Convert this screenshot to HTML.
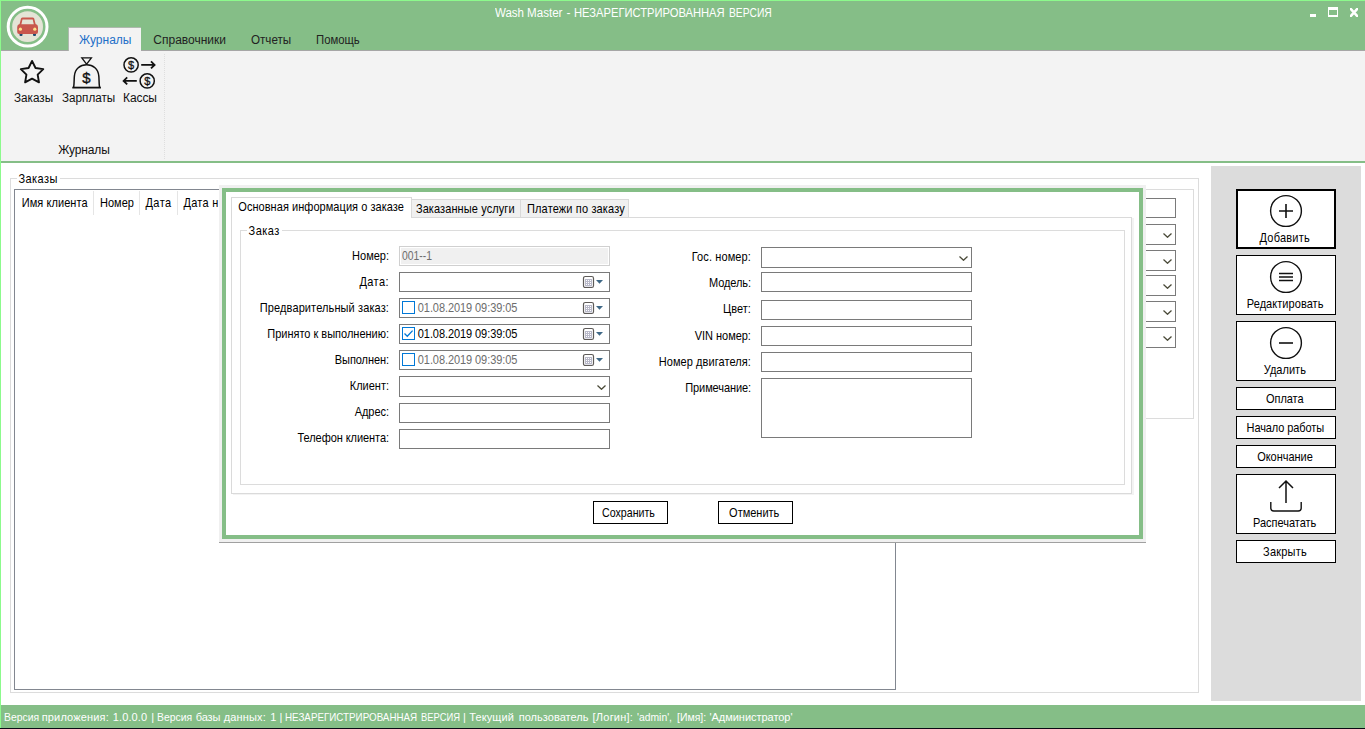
<!DOCTYPE html>
<html lang="ru"><head><meta charset="utf-8"><title>Wash Master</title>
<style>
html,body{margin:0;padding:0}
body{width:1365px;height:729px;overflow:hidden;background:#fff;position:relative;font-family:'Liberation Sans', sans-serif}
div,svg,span.t{position:absolute}
span.t{white-space:pre;font-family:'Liberation Sans', sans-serif}
</style></head><body>
<div class="" style="left:0px;top:0px;width:1365px;height:50px;background:#85be87"></div>
<div class="" style="left:0px;top:50px;width:1365px;height:1px;background:#a6a6a6"></div>
<div class="" style="left:0px;top:51px;width:1365px;height:110px;background:#f3f3f3"></div>
<div class="" style="left:0px;top:161px;width:1365px;height:2px;background:#85be87"></div>
<div class="" style="left:68px;top:27px;width:73px;height:24px;background:#f3f3f3;border-left:1px solid #aeb9ae;border-top:1px solid #aeb9ae;box-sizing:border-box"></div>
<div class="" style="left:164px;top:54px;width:0px;height:105px;border-left:1px dotted #dedede"></div>
<svg style="left:5px;top:4px" width="46" height="46" viewBox="0 0 46 46">
<circle cx="22.6" cy="22.7" r="19.4" fill="none" stroke="#fff" stroke-width="3"/>
<circle cx="22.6" cy="22.7" r="15.4" fill="#e4e4d6"/>
<rect x="14.5" y="29" width="3" height="3" rx="1" fill="#1f4a70"/><rect x="28" y="29" width="3" height="3" rx="1" fill="#1f4a70"/>
<path d="M14.6 20 L16 14.6 Q16.4 13.4 17.8 13.4 H27.4 Q28.8 13.4 29.2 14.6 L30.6 20 Q33 20.4 33 23 V28 Q33 30 31 30 H14.2 Q12.2 30 12.2 28 V23 Q12.2 20.4 14.6 20 Z" fill="#c9574d"/>
<path d="M16.4 20.2 L17.5 15.6 H27.7 L28.8 20.2 Z" fill="#e4e4d6"/>
<circle cx="15.4" cy="25.2" r="1.6" fill="#ffe08a"/><circle cx="29.8" cy="25.2" r="1.6" fill="#ffe08a"/>
</svg>
<div class="" style="left:1310px;top:14px;width:6px;height:3px;background:#fff"></div>
<div class="" style="left:1328px;top:7px;width:10px;height:10px;border:1px solid #fff;border-top-width:3px;border-bottom-width:2px;box-sizing:border-box"></div>
<svg style="left:1350px;top:8px;overflow:hidden" width="8" height="9" viewBox="0 0 8 9"><path d="M-1 -1.1 L9 10.1 M9 -1.1 L-1 10.1" stroke="#fff" stroke-width="2.5" fill="none"/></svg>
<svg style="left:12px;top:54px" width="150" height="40" viewBox="12 54 150 40" fill="none" stroke="#111">
<path id="star" stroke-width="1.9" stroke-linejoin="round" d="M32.05 60.95 L35.52 67.98 L43.27 69.10 L37.66 74.57 L38.99 82.30 L32.05 78.65 L25.11 82.30 L26.44 74.57 L20.83 69.10 L28.58 67.98 Z"/>
<path stroke-width="1.3" d="M81.8 57.8 H91.4 L86.6 64.2 Z"/>
<path stroke-width="1.5" d="M73.6 88 C74.4 82 74 79 74.4 76 C75 69 80 64.8 86.6 64.8 C93.2 64.8 98.2 69 98.8 76 C99.2 79 98.8 82 99.6 88"/>
<path stroke-width="1.8" d="M72.3 87.6 H100.9"/>
<circle cx="131.1" cy="64.9" r="7.1" stroke-width="1.5"/>
<circle cx="147.2" cy="80.9" r="7.1" stroke-width="1.5"/>
<path stroke-width="1.8" d="M141.2 64.9 H154.2 M151 61.4 L154.6 64.9 L151 68.4"/>
<path stroke-width="1.8" d="M136.8 80.9 H124 M127.2 77.4 L123.6 80.9 L127.2 84.4"/>
</svg>
<span class="t" style="left:82.2px;top:69.9px;font-size:15px;line-height:15px;color:#111;-webkit-text-stroke:0.35px #111">$</span>
<span class="t" style="left:128.1px;top:59.6px;font-size:11px;line-height:11px;color:#111;-webkit-text-stroke:0.3px #111">$</span>
<span class="t" style="left:144.2px;top:75.6px;font-size:11px;line-height:11px;color:#111;-webkit-text-stroke:0.3px #111">$</span>
<div class="" style="left:10px;top:178px;width:1189px;height:515px;border:1px solid #dcdcdc;box-sizing:border-box"></div>
<div class="" style="left:17px;top:176px;width:43px;height:5px;background:#fff"></div>
<div class="" style="left:14px;top:189px;width:882px;height:501px;border:1px solid #828790;box-sizing:border-box;background:#fff"></div>
<div class="" style="left:93px;top:191px;width:1px;height:24px;background:#e5e5e5"></div>
<div class="" style="left:139px;top:191px;width:1px;height:24px;background:#e5e5e5"></div>
<div class="" style="left:177px;top:191px;width:1px;height:24px;background:#e5e5e5"></div>
<div class="" style="left:900px;top:189px;width:294px;height:230px;border:1px solid #dcdcdc;box-sizing:border-box"></div>
<div class="" style="left:1100px;top:198px;width:76px;height:20px;border:1px solid #7a7a7a;box-sizing:border-box;background:#fff"></div>
<div class="" style="left:1100px;top:224px;width:76px;height:21px;border:1px solid #7a7a7a;box-sizing:border-box;background:#fff"><svg style="right:3.2px;top:7.6px" width="9" height="5" viewBox="0 0 9 5"><path d="M0.5 0.5 L4.5 4.3 L8.5 0.5" stroke="#4a4a38" stroke-width="1.25" fill="none"/></svg></div>
<div class="" style="left:1100px;top:250px;width:76px;height:21px;border:1px solid #7a7a7a;box-sizing:border-box;background:#fff"><svg style="right:3.2px;top:7.6px" width="9" height="5" viewBox="0 0 9 5"><path d="M0.5 0.5 L4.5 4.3 L8.5 0.5" stroke="#4a4a38" stroke-width="1.25" fill="none"/></svg></div>
<div class="" style="left:1100px;top:275px;width:76px;height:21px;border:1px solid #7a7a7a;box-sizing:border-box;background:#fff"><svg style="right:3.2px;top:7.6px" width="9" height="5" viewBox="0 0 9 5"><path d="M0.5 0.5 L4.5 4.3 L8.5 0.5" stroke="#4a4a38" stroke-width="1.25" fill="none"/></svg></div>
<div class="" style="left:1100px;top:301px;width:76px;height:21px;border:1px solid #7a7a7a;box-sizing:border-box;background:#fff"><svg style="right:3.2px;top:7.6px" width="9" height="5" viewBox="0 0 9 5"><path d="M0.5 0.5 L4.5 4.3 L8.5 0.5" stroke="#4a4a38" stroke-width="1.25" fill="none"/></svg></div>
<div class="" style="left:1100px;top:327px;width:76px;height:21px;border:1px solid #7a7a7a;box-sizing:border-box;background:#fff"><svg style="right:3.2px;top:7.6px" width="9" height="5" viewBox="0 0 9 5"><path d="M0.5 0.5 L4.5 4.3 L8.5 0.5" stroke="#4a4a38" stroke-width="1.25" fill="none"/></svg></div>
<div class="" style="left:1211px;top:166px;width:150px;height:535px;background:#dcdcdc"></div>
<div class="" style="left:1236px;top:189px;width:100px;height:60px;border:2px solid #000;box-sizing:border-box;background:#fff"></div>
<div class="" style="left:1236px;top:255px;width:100px;height:60px;border:1px solid #000;box-sizing:border-box;background:#fff"></div>
<div class="" style="left:1236px;top:321px;width:100px;height:60px;border:1px solid #000;box-sizing:border-box;background:#fff"></div>
<div class="" style="left:1236px;top:387px;width:100px;height:23px;border:1px solid #000;box-sizing:border-box;background:#fff"></div>
<div class="" style="left:1236px;top:416px;width:100px;height:23px;border:1px solid #000;box-sizing:border-box;background:#fff"></div>
<div class="" style="left:1236px;top:445px;width:100px;height:23px;border:1px solid #000;box-sizing:border-box;background:#fff"></div>
<div class="" style="left:1236px;top:474px;width:100px;height:60px;border:1px solid #000;box-sizing:border-box;background:#fff"></div>
<div class="" style="left:1236px;top:540px;width:100px;height:23px;border:1px solid #000;box-sizing:border-box;background:#fff"></div>
<svg style="left:1266px;top:190px" width="40" height="330" viewBox="1266 190 40 330" fill="none" stroke="#111" stroke-width="1.4">
<circle cx="1286" cy="211" r="15.4"/><path d="M1279 211 H1293 M1286 204 V218" stroke-width="1.6"/>
<circle cx="1286" cy="277" r="15.4"/><path d="M1279 273.5 H1293 M1279 277 H1293 M1279 280.5 H1293" stroke-width="1.4"/>
<circle cx="1286" cy="343" r="15.4"/><path d="M1279 343 H1293" stroke-width="1.6"/>
<path d="M1286 503 V481 M1279 488 L1286 481 L1293 488" stroke-width="1.5"/>
<path d="M1270.8 502 V508 Q1270.8 511 1273.8 511 H1298.2 Q1301.2 511 1301.2 508 V502" stroke-width="1.4"/>
</svg>
<div class="" style="left:0px;top:705px;width:1365px;height:23px;background:#85be87"></div>
<div class="" style="left:0px;top:728px;width:1365px;height:1px;background:#0a0a14"></div>
<div class="" style="left:0px;top:0px;width:1365px;height:1px;background:#8cfa8c"></div>
<div class="" style="left:0px;top:0px;width:1px;height:728px;background:#8cfa8c"></div>
<div class="" style="left:219px;top:185px;width:927px;height:357px;background:#f0f0f0"></div>
<div class="" style="left:219px;top:542px;width:927px;height:1px;background:#a0a0a0"></div>
<div class="" style="left:222px;top:188px;width:921px;height:351px;background:#fff;border:4px solid #85be87;box-sizing:border-box"></div>
<div class="" style="left:231px;top:217px;width:901px;height:277px;border:1px solid #dadada;box-sizing:border-box;background:#fff;box-shadow:2px 1px 0 #f3f3f3"></div>
<div class="" style="left:411px;top:199px;width:110px;height:19px;border:1px solid #d9d9d9;box-sizing:border-box;background:#f0f0f0"></div>
<div class="" style="left:520px;top:199px;width:109px;height:19px;border:1px solid #d9d9d9;box-sizing:border-box;background:#f0f0f0"></div>
<div class="" style="left:231px;top:197px;width:181px;height:21px;border:1px solid #d9d9d9;border-bottom:none;box-sizing:border-box;background:#fff"></div>
<div class="" style="left:240px;top:230px;width:885px;height:255px;border:1px solid #dcdcdc;box-sizing:border-box"></div>
<div class="" style="left:247px;top:228px;width:35px;height:5px;background:#fff"></div>
<div class="" style="left:399px;top:246px;width:211px;height:20px;border:1px solid #d0d0d0;box-sizing:border-box;background:#f0f0f0;box-shadow:inset 0 0 0 1px #fff"></div>
<div class="" style="left:399px;top:272px;width:211px;height:20px;border:1px solid #7a7a7a;box-sizing:border-box;background:#fff"><svg style="left:182px;top:2px" width="22" height="14" viewBox="0 0 22 14"><rect x="1.5" y="1.5" width="10" height="11" rx="1.8" fill="#fff" stroke="#5d5a58" stroke-width="1.2"/><rect x="3" y="4" width="7" height="7.4" fill="#b9b9c9"/><g fill="#fff"><rect x="4" y="5" width="1" height="1"/><rect x="6" y="5" width="1" height="1"/><rect x="8" y="5" width="1" height="1"/><rect x="4" y="7" width="1" height="1"/><rect x="6" y="7" width="1" height="1"/><rect x="8" y="7" width="1" height="1"/><rect x="4" y="9" width="1" height="1"/><rect x="6" y="9" width="1" height="1"/><rect x="8" y="9" width="1" height="1"/></g><path d="M14 5 H21 L17.5 8.8 Z" fill="#3f6886"/></svg></div>
<div class="" style="left:399px;top:298px;width:211px;height:20px;border:1px solid #7a7a7a;box-sizing:border-box;background:#fff"><svg style="left:182px;top:2px" width="22" height="14" viewBox="0 0 22 14"><rect x="1.5" y="1.5" width="10" height="11" rx="1.8" fill="#fff" stroke="#5d5a58" stroke-width="1.2"/><rect x="3" y="4" width="7" height="7.4" fill="#b9b9c9"/><g fill="#fff"><rect x="4" y="5" width="1" height="1"/><rect x="6" y="5" width="1" height="1"/><rect x="8" y="5" width="1" height="1"/><rect x="4" y="7" width="1" height="1"/><rect x="6" y="7" width="1" height="1"/><rect x="8" y="7" width="1" height="1"/><rect x="4" y="9" width="1" height="1"/><rect x="6" y="9" width="1" height="1"/><rect x="8" y="9" width="1" height="1"/></g><path d="M14 5 H21 L17.5 8.8 Z" fill="#3f6886"/></svg><div style="left:2px;top:2px;width:13px;height:13px;border:1px solid #0078d7;box-sizing:border-box;background:#fff"></div></div>
<div class="" style="left:399px;top:324px;width:211px;height:20px;border:1px solid #7a7a7a;box-sizing:border-box;background:#fff"><svg style="left:182px;top:2px" width="22" height="14" viewBox="0 0 22 14"><rect x="1.5" y="1.5" width="10" height="11" rx="1.8" fill="#fff" stroke="#5d5a58" stroke-width="1.2"/><rect x="3" y="4" width="7" height="7.4" fill="#b9b9c9"/><g fill="#fff"><rect x="4" y="5" width="1" height="1"/><rect x="6" y="5" width="1" height="1"/><rect x="8" y="5" width="1" height="1"/><rect x="4" y="7" width="1" height="1"/><rect x="6" y="7" width="1" height="1"/><rect x="8" y="7" width="1" height="1"/><rect x="4" y="9" width="1" height="1"/><rect x="6" y="9" width="1" height="1"/><rect x="8" y="9" width="1" height="1"/></g><path d="M14 5 H21 L17.5 8.8 Z" fill="#3f6886"/></svg><div style="left:2px;top:2px;width:13px;height:13px;border:1px solid #0078d7;box-sizing:border-box;background:#fff"><svg style="left:0px;top:0px" width="11" height="11" viewBox="0 0 11 11"><path d="M1.5 5.5 L4.3 8.3 L9.6 2.6" stroke="#0078d7" stroke-width="1.3" fill="none"/></svg></div></div>
<div class="" style="left:399px;top:350px;width:211px;height:20px;border:1px solid #7a7a7a;box-sizing:border-box;background:#fff"><svg style="left:182px;top:2px" width="22" height="14" viewBox="0 0 22 14"><rect x="1.5" y="1.5" width="10" height="11" rx="1.8" fill="#fff" stroke="#5d5a58" stroke-width="1.2"/><rect x="3" y="4" width="7" height="7.4" fill="#b9b9c9"/><g fill="#fff"><rect x="4" y="5" width="1" height="1"/><rect x="6" y="5" width="1" height="1"/><rect x="8" y="5" width="1" height="1"/><rect x="4" y="7" width="1" height="1"/><rect x="6" y="7" width="1" height="1"/><rect x="8" y="7" width="1" height="1"/><rect x="4" y="9" width="1" height="1"/><rect x="6" y="9" width="1" height="1"/><rect x="8" y="9" width="1" height="1"/></g><path d="M14 5 H21 L17.5 8.8 Z" fill="#3f6886"/></svg><div style="left:2px;top:2px;width:13px;height:13px;border:1px solid #0078d7;box-sizing:border-box;background:#fff"></div></div>
<div class="" style="left:399px;top:376px;width:211px;height:21px;border:1px solid #7a7a7a;box-sizing:border-box;background:#fff"><svg style="right:3.2px;top:7.6px" width="9" height="5" viewBox="0 0 9 5"><path d="M0.5 0.5 L4.5 4.3 L8.5 0.5" stroke="#4a4a38" stroke-width="1.25" fill="none"/></svg></div>
<div class="" style="left:399px;top:403px;width:211px;height:20px;border:1px solid #7a7a7a;box-sizing:border-box;background:#fff"></div>
<div class="" style="left:399px;top:429px;width:211px;height:20px;border:1px solid #7a7a7a;box-sizing:border-box;background:#fff"></div>
<div class="" style="left:761px;top:247px;width:211px;height:21px;border:1px solid #7a7a7a;box-sizing:border-box;background:#fff"><svg style="right:3.2px;top:7.6px" width="9" height="5" viewBox="0 0 9 5"><path d="M0.5 0.5 L4.5 4.3 L8.5 0.5" stroke="#4a4a38" stroke-width="1.25" fill="none"/></svg></div>
<div class="" style="left:761px;top:272px;width:211px;height:20px;border:1px solid #7a7a7a;box-sizing:border-box;background:#fff"></div>
<div class="" style="left:761px;top:300px;width:211px;height:20px;border:1px solid #7a7a7a;box-sizing:border-box;background:#fff"></div>
<div class="" style="left:761px;top:326px;width:211px;height:20px;border:1px solid #7a7a7a;box-sizing:border-box;background:#fff"></div>
<div class="" style="left:761px;top:352px;width:211px;height:20px;border:1px solid #7a7a7a;box-sizing:border-box;background:#fff"></div>
<div class="" style="left:761px;top:378px;width:211px;height:60px;border:1px solid #7a7a7a;box-sizing:border-box;background:#fff"></div>
<div class="" style="left:593px;top:501px;width:75px;height:23px;border:1px solid #000;box-sizing:border-box;background:#fff"></div>
<div class="" style="left:718px;top:501px;width:75px;height:23px;border:1px solid #000;box-sizing:border-box;background:#fff"></div>
<span class="t" style="left:495.00px;top:7.34px;font-size:12px;line-height:12px;color:#fff;transform:scale(0.9592,1);transform-origin:0 84.65%">Wash</span>
<span class="t" style="left:527.40px;top:7.34px;font-size:12px;line-height:12px;color:#fff;transform:scale(0.9676,1);transform-origin:0 84.65%">Master</span>
<span class="t" style="left:566.55px;top:7.34px;font-size:12px;line-height:12px;color:#fff">-</span>
<span class="t" style="left:574.00px;top:7.34px;font-size:12px;line-height:12px;color:#fff;transform:scale(0.9313,1);transform-origin:0 84.65%">НЕЗАРЕГИСТРИРОВАННАЯ</span>
<span class="t" style="left:728.50px;top:7.34px;font-size:12px;line-height:12px;color:#fff;transform:scale(0.8567,1);transform-origin:0 84.65%">ВЕРСИЯ</span>
<span class="t" style="left:79.00px;top:34.34px;font-size:12px;line-height:12px;color:#1e6fc8;letter-spacing:0.011px">Журналы</span>
<span class="t" style="left:153.30px;top:34.34px;font-size:12px;line-height:12px;color:#222;letter-spacing:-0.000px">Справочники</span>
<span class="t" style="left:250.50px;top:34.34px;font-size:12px;line-height:12px;color:#222;transform:scale(0.9690,1);transform-origin:0 84.65%">Отчеты</span>
<span class="t" style="left:315.70px;top:34.34px;font-size:12px;line-height:12px;color:#222;transform:scale(0.9426,1);transform-origin:0 84.65%">Помощь</span>
<span class="t" style="left:13.70px;top:92.34px;font-size:12px;line-height:12px;color:#111;transform:scale(0.9748,1);transform-origin:0 84.65%">Заказы</span>
<span class="t" style="left:61.50px;top:92.34px;font-size:12px;line-height:12px;color:#111;transform:scale(0.9736,1);transform-origin:0 84.65%">Зарплаты</span>
<span class="t" style="left:123.10px;top:92.34px;font-size:12px;line-height:12px;color:#111;letter-spacing:-0.119px">Кассы</span>
<span class="t" style="left:58.20px;top:144.34px;font-size:12px;line-height:12px;color:#111;letter-spacing:-0.132px">Журналы</span>
<span class="t" style="left:18.50px;top:174.19px;font-size:11px;line-height:11px;color:#000;letter-spacing:0.406px;transform:scale(1.0000,1.1);transform-origin:0 84.65%">Заказы</span>
<span class="t" style="left:21.70px;top:198.19px;font-size:11px;line-height:11px;color:#000;letter-spacing:0.071px;transform:scale(1.0000,1.1);transform-origin:0 84.65%">Имя клиента</span>
<span class="t" style="left:99.90px;top:198.19px;font-size:11px;line-height:11px;color:#000;letter-spacing:0.048px;transform:scale(1.0000,1.1);transform-origin:0 84.65%">Номер</span>
<span class="t" style="left:145.50px;top:198.19px;font-size:11px;line-height:11px;color:#000;letter-spacing:0.410px;transform:scale(1.0000,1.1);transform-origin:0 84.65%">Дата</span>
<span class="t" style="left:183.40px;top:198.19px;font-size:11px;line-height:11px;color:#000;letter-spacing:0.300px;transform:scale(1.0000,1.1);transform-origin:0 84.65%">Дата н</span>
<span class="t" style="left:3.90px;top:712.19px;font-size:11px;line-height:11px;color:#fff;transform:scale(0.9439,1);transform-origin:0 84.65%">Версия</span>
<span class="t" style="left:41.70px;top:712.19px;font-size:11px;line-height:11px;color:#fff;letter-spacing:0.157px">приложения:</span>
<span class="t" style="left:112.70px;top:712.19px;font-size:11px;line-height:11px;color:#fff;letter-spacing:0.137px">1.0.0.0</span>
<span class="t" style="left:151.27px;top:712.19px;font-size:11px;line-height:11px;color:#fff">|</span>
<span class="t" style="left:157.30px;top:712.19px;font-size:11px;line-height:11px;color:#fff;transform:scale(0.9439,1);transform-origin:0 84.65%">Версия</span>
<span class="t" style="left:195.80px;top:712.19px;font-size:11px;line-height:11px;color:#fff;letter-spacing:-0.125px">базы</span>
<span class="t" style="left:223.70px;top:712.19px;font-size:11px;line-height:11px;color:#fff;letter-spacing:0.163px">данных:</span>
<span class="t" style="left:270.24px;top:712.19px;font-size:11px;line-height:11px;color:#fff">1</span>
<span class="t" style="left:279.57px;top:712.19px;font-size:11px;line-height:11px;color:#fff">|</span>
<span class="t" style="left:285.10px;top:712.19px;font-size:11px;line-height:11px;color:#fff;transform:scale(0.8918,1);transform-origin:0 84.65%">НЕЗАРЕГИСТРИРОВАННАЯ</span>
<span class="t" style="left:420.70px;top:712.19px;font-size:11px;line-height:11px;color:#fff;transform:scale(0.8536,1);transform-origin:0 84.65%">ВЕРСИЯ</span>
<span class="t" style="left:463.07px;top:712.19px;font-size:11px;line-height:11px;color:#fff">|</span>
<span class="t" style="left:469.20px;top:712.19px;font-size:11px;line-height:11px;color:#fff;letter-spacing:0.114px">Текущий</span>
<span class="t" style="left:518.70px;top:712.19px;font-size:11px;line-height:11px;color:#fff;letter-spacing:0.030px">пользователь</span>
<span class="t" style="left:592.60px;top:712.19px;font-size:11px;line-height:11px;color:#fff;letter-spacing:0.219px">[Логин]:</span>
<span class="t" style="left:637.00px;top:712.19px;font-size:11px;line-height:11px;color:#fff;transform:scale(0.9404,1);transform-origin:0 84.65%">&#x27;admin&#x27;,</span>
<span class="t" style="left:676.50px;top:712.19px;font-size:11px;line-height:11px;color:#fff;transform:scale(0.9544,1);transform-origin:0 84.65%">[Имя]:</span>
<span class="t" style="left:709.50px;top:712.19px;font-size:11px;line-height:11px;color:#fff;letter-spacing:-0.039px">&#x27;Администратор&#x27;</span>
<span class="t" style="left:238.30px;top:202.19px;font-size:11px;line-height:11px;color:#000;letter-spacing:0.047px;transform:scale(1.0000,1.1);transform-origin:0 84.65%">Основная информация о заказе</span>
<span class="t" style="left:415.90px;top:204.19px;font-size:11px;line-height:11px;color:#000;letter-spacing:0.097px;transform:scale(1.0000,1.1);transform-origin:0 84.65%">Заказанные услуги</span>
<span class="t" style="left:527.00px;top:204.19px;font-size:11px;line-height:11px;color:#000;letter-spacing:0.145px;transform:scale(1.0000,1.1);transform-origin:0 84.65%">Платежи по заказу</span>
<span class="t" style="left:248.50px;top:226.19px;font-size:11px;line-height:11px;color:#000;letter-spacing:0.488px;transform:scale(1.0000,1.1);transform-origin:0 84.65%">Заказ</span>
<span class="t" style="left:352.10px;top:251.19px;font-size:11px;line-height:11px;color:#000;letter-spacing:-0.004px;transform:scale(1.0000,1.1);transform-origin:0 84.65%">Номер:</span>
<span class="t" style="left:359.40px;top:277.19px;font-size:11px;line-height:11px;color:#000;letter-spacing:0.436px;transform:scale(1.0000,1.1);transform-origin:0 84.65%">Дата:</span>
<span class="t" style="left:259.80px;top:303.19px;font-size:11px;line-height:11px;color:#000;letter-spacing:0.112px;transform:scale(1.0000,1.1);transform-origin:0 84.65%">Предварительный заказ:</span>
<span class="t" style="left:267.30px;top:329.19px;font-size:11px;line-height:11px;color:#000;letter-spacing:-0.009px;transform:scale(1.0000,1.1);transform-origin:0 84.65%">Принято к выполнению:</span>
<span class="t" style="left:334.80px;top:355.19px;font-size:11px;line-height:11px;color:#000;letter-spacing:-0.070px;transform:scale(1.0000,1.1);transform-origin:0 84.65%">Выполнен:</span>
<span class="t" style="left:349.80px;top:381.19px;font-size:11px;line-height:11px;color:#000;letter-spacing:-0.009px;transform:scale(1.0000,1.1);transform-origin:0 84.65%">Клиент:</span>
<span class="t" style="left:354.70px;top:407.19px;font-size:11px;line-height:11px;color:#000;letter-spacing:-0.041px;transform:scale(1.0000,1.1);transform-origin:0 84.65%">Адрес:</span>
<span class="t" style="left:297.50px;top:433.19px;font-size:11px;line-height:11px;color:#000;letter-spacing:-0.061px;transform:scale(1.0000,1.1);transform-origin:0 84.65%">Телефон клиента:</span>
<span class="t" style="left:691.80px;top:252.19px;font-size:11px;line-height:11px;color:#000;letter-spacing:0.100px;transform:scale(1.0000,1.1);transform-origin:0 84.65%">Гос. номер:</span>
<span class="t" style="left:709.10px;top:278.19px;font-size:11px;line-height:11px;color:#000;letter-spacing:-0.107px;transform:scale(1.0000,1.1);transform-origin:0 84.65%">Модель:</span>
<span class="t" style="left:723.00px;top:304.19px;font-size:11px;line-height:11px;color:#000;letter-spacing:0.036px;transform:scale(1.0000,1.1);transform-origin:0 84.65%">Цвет:</span>
<span class="t" style="left:694.80px;top:331.19px;font-size:11px;line-height:11px;color:#000;letter-spacing:-0.035px;transform:scale(1.0000,1.1);transform-origin:0 84.65%">VIN номер:</span>
<span class="t" style="left:658.70px;top:357.19px;font-size:11px;line-height:11px;color:#000;letter-spacing:0.070px;transform:scale(1.0000,1.1);transform-origin:0 84.65%">Номер двигателя:</span>
<span class="t" style="left:685.30px;top:383.19px;font-size:11px;line-height:11px;color:#000;letter-spacing:-0.103px;transform:scale(1.0000,1.1);transform-origin:0 84.65%">Примечание:</span>
<span class="t" style="left:402.00px;top:251.19px;font-size:11px;line-height:11px;color:#6d6d6d;transform:scale(0.9435,1.1);transform-origin:0 84.65%">001--1</span>
<span class="t" style="left:417.80px;top:303.19px;font-size:11px;line-height:11px;color:#6d6d6d;letter-spacing:-0.076px;transform:scale(1.0000,1.1);transform-origin:0 84.65%">01.08.2019 09:39:05</span>
<span class="t" style="left:417.80px;top:329.19px;font-size:11px;line-height:11px;color:#000;letter-spacing:-0.076px;transform:scale(1.0000,1.1);transform-origin:0 84.65%">01.08.2019 09:39:05</span>
<span class="t" style="left:417.80px;top:355.19px;font-size:11px;line-height:11px;color:#6d6d6d;letter-spacing:-0.076px;transform:scale(1.0000,1.1);transform-origin:0 84.65%">01.08.2019 09:39:05</span>
<span class="t" style="left:602.20px;top:508.19px;font-size:11px;line-height:11px;color:#000;transform:scale(0.9676,1.1);transform-origin:0 84.65%">Сохранить</span>
<span class="t" style="left:729.10px;top:508.19px;font-size:11px;line-height:11px;color:#000;letter-spacing:-0.008px;transform:scale(1.0000,1.1);transform-origin:0 84.65%">Отменить</span>
<span class="t" style="left:1259.50px;top:233.19px;font-size:11px;line-height:11px;color:#000;letter-spacing:0.234px;transform:scale(1.0000,1.1);transform-origin:0 84.65%">Добавить</span>
<span class="t" style="left:1246.80px;top:299.19px;font-size:11px;line-height:11px;color:#000;letter-spacing:0.054px;transform:scale(1.0000,1.1);transform-origin:0 84.65%">Редактировать</span>
<span class="t" style="left:1263.80px;top:365.19px;font-size:11px;line-height:11px;color:#000;letter-spacing:0.014px;transform:scale(1.0000,1.1);transform-origin:0 84.65%">Удалить</span>
<span class="t" style="left:1266.10px;top:394.19px;font-size:11px;line-height:11px;color:#000;letter-spacing:-0.074px;transform:scale(1.0000,1.1);transform-origin:0 84.65%">Оплата</span>
<span class="t" style="left:1246.60px;top:423.19px;font-size:11px;line-height:11px;color:#000;letter-spacing:-0.104px;transform:scale(1.0000,1.1);transform-origin:0 84.65%">Начало работы</span>
<span class="t" style="left:1257.20px;top:452.19px;font-size:11px;line-height:11px;color:#000;letter-spacing:-0.031px;transform:scale(1.0000,1.1);transform-origin:0 84.65%">Окончание</span>
<span class="t" style="left:1253.00px;top:518.19px;font-size:11px;line-height:11px;color:#000;letter-spacing:-0.015px;transform:scale(1.0000,1.1);transform-origin:0 84.65%">Распечатать</span>
<span class="t" style="left:1263.10px;top:547.19px;font-size:11px;line-height:11px;color:#000;letter-spacing:0.204px;transform:scale(1.0000,1.1);transform-origin:0 84.65%">Закрыть</span>
</body></html>
